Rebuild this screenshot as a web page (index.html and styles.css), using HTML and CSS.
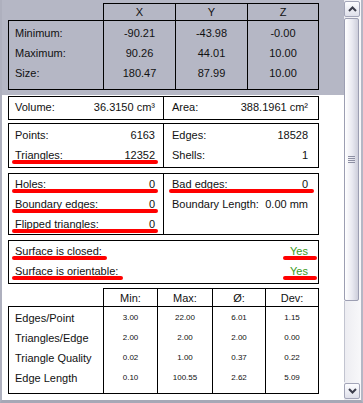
FILE: index.html
```html
<!DOCTYPE html>
<html lang="en">
<head>
    <meta charset="UTF-8">
    <title>Mesh Info</title>
    <link rel="stylesheet" href="styles.css">
</head>
<body>

<div class="window">
    <div class="pane">

        <div class="dims">
            <div class="dims-head">
                <div class="dh-blank"></div>
                <div class="dh dh-first">X</div>
                <div class="dh">Y</div>
                <div class="dh">Z</div>
            </div>
            <div class="dims-body">
                <div class="dims-row">
                    <span class="lbl">Minimum:</span><span class="num">-90.21</span><span class="num">-43.98</span><span class="num">-0.00</span>
                </div>
                <div class="dims-row">
                    <span class="lbl">Maximum:</span><span class="num">90.26</span><span class="num">44.01</span><span class="num">10.00</span>
                </div>
                <div class="dims-row">
                    <span class="lbl">Size:</span><span class="num">180.47</span><span class="num">87.99</span><span class="num">10.00</span>
                </div>
            </div>
        </div>

        <div class="sheet">
            <div class="box split vol">
                <div class="cell"><div class="row"><span>Volume:</span><span>36.3150 cm³</span></div></div>
                <div class="cell"><div class="row"><span>Area:</span><span>388.1961 cm²</span></div></div>
            </div>

            <div class="box split counts">
                <div class="cell">
                    <div class="row"><span>Points:</span><span>6163</span></div>
                    <div class="row mark"><span>Triangles:</span><span>12352</span></div>
                </div>
                <div class="cell">
                    <div class="row"><span>Edges:</span><span>18528</span></div>
                    <div class="row"><span>Shells:</span><span>1</span></div>
                </div>
            </div>

            <div class="box split defects">
                <div class="cell">
                    <div class="row mark"><span>Holes:</span><span>0</span></div>
                    <div class="row mark"><span>Boundary edges:</span><span>0</span></div>
                    <div class="row mark"><span>Flipped triangles:</span><span>0</span></div>
                </div>
                <div class="cell">
                    <div class="row mark mark-r"><span>Bad edges:</span><span>0</span></div>
                    <div class="row"><span>Boundary Length:</span><span>0.00 mm</span></div>
                </div>
            </div>

            <div class="box surface">
                <div class="row"><span class="tag">Surface is closed:</span><span class="tag yes">Yes</span></div>
                <div class="row"><span class="tag">Surface is orientable:</span><span class="tag yes">Yes</span></div>
            </div>

            <div class="stats">
                <div class="stats-head">
                    <div class="sh-blank"></div>
                    <div class="sh sh-first">Min:</div>
                    <div class="sh">Max:</div>
                    <div class="sh">Ø:</div>
                    <div class="sh">Dev:</div>
                </div>
                <div class="stats-body">
                    <div class="stats-row">
                        <span class="lbl">Edges/Point</span><span class="num">3.00</span><span class="num">22.00</span><span class="num">6.01</span><span class="num">1.15</span>
                    </div>
                    <div class="stats-row">
                        <span class="lbl">Triangles/Edge</span><span class="num">2.00</span><span class="num">2.00</span><span class="num">2.00</span><span class="num">0.00</span>
                    </div>
                    <div class="stats-row">
                        <span class="lbl">Triangle Quality</span><span class="num">0.02</span><span class="num">1.00</span><span class="num">0.37</span><span class="num">0.22</span>
                    </div>
                    <div class="stats-row">
                        <span class="lbl">Edge Length</span><span class="num">0.10</span><span class="num">100.55</span><span class="num">2.62</span><span class="num">5.09</span>
                    </div>
                </div>
            </div>
        </div>

    </div>

    <div class="scrollbar">
        <div class="sb-btn sb-up">
            <svg width="9" height="6" viewBox="0 0 9 6"><polyline points="1,5 4.5,1.5 8,5" fill="none" stroke="#3c3e4c" stroke-width="2"/></svg>
        </div>
        <div class="sb-thumb">
            <div class="grip"></div>
        </div>
        <div class="sb-track"></div>
        <div class="sb-btn sb-down">
            <svg width="9" height="6" viewBox="0 0 9 6"><polyline points="1,1 4.5,4.5 8,1" fill="none" stroke="#3c3e4c" stroke-width="2"/></svg>
        </div>
    </div>
</div>

</body>
</html>
```

FILE: styles.css
```css
html, body {
    margin: 0;
    padding: 0;
}
body {
    font: 11px "Liberation Sans", Arial, sans-serif;
    color: #111;
    background: #fff;
}

.window {
    display: flex;
    width: 363px;
    height: 403px;
    box-sizing: border-box;
    border-left: 2px solid #aeb0be;
    border-right: 2px solid #b5b7c5;
    border-bottom: 3px solid #a6a8b6;
    background: #fff;
    overflow: hidden;
}
.pane {
    width: 342px;
}

/* bounding box table */
.dims {
    background: #b5b7c5;
    padding: 3px 0 5px 6px;
}
.dims-head {
    display: grid;
    grid-template-columns: 95px 73px 72px 71px;
    height: 17px;
}
.dh {
    border-top: 1px solid #000;
    border-right: 1px solid #000;
    text-align: center;
    line-height: 16px;
}
.dh-first {
    border-left: 1px solid #000;
}
.dims-body {
    width: 311px;
    box-sizing: border-box;
    border: 1px solid #000;
}
.dims-row {
    display: grid;
    grid-template-columns: 94px 72px 72px 71px;
    line-height: 20px;
}
.dims-row .lbl {
    padding-left: 6px;
}
.dims-row .num {
    border-left: 1px solid #000;
    text-align: center;
}
.dims-row:first-child > span {
    padding-top: 2px;
}
.dims-row:last-child > span {
    padding-bottom: 6px;
}

/* white sheet */
.sheet {
    padding: 1px 0 0 6px;
}
.box {
    width: 311px;
    box-sizing: border-box;
    border: 1px solid #000;
}
.split {
    display: grid;
    grid-template-columns: 155px 154px;
}
.split > .cell:first-child {
    border-right: 1px solid #000;
    padding: 0 8px 0 6px;
}
.split > .cell:last-child {
    padding: 0 10px 0 8px;
}
.row {
    display: flex;
    justify-content: space-between;
    height: 20px;
    line-height: 20px;
    white-space: nowrap;
    position: relative;
}

.vol .cell {
    padding-bottom: 2px !important;
}
.counts {
    margin-top: 3px;
}
.counts .cell {
    padding-top: 1px !important;
    padding-bottom: 2px !important;
}
.defects {
    margin-top: 5px;
}
.surface {
    margin-top: 5px;
    padding: 0 10px 2px 6px;
}

/* red annotation strokes */
.mark::after,
.tag::after {
    content: "";
    position: absolute;
    bottom: 1px;
    height: 4px;
    border-radius: 2px;
    background: #f00;
}
.mark::after {
    left: -3px;
    right: -3px;
}
.mark-r::after {
    right: -6px;
}
.tag {
    display: inline-block;
    position: relative;
    height: 20px;
}
.tag::after {
    left: -3px;
    right: -5px;
}
.yes {
    color: #3a9a1c;
}
.yes::after {
    left: -7px;
    right: -9px;
}

/* statistics table */
.stats {
    margin-top: 4px;
}
.stats-head {
    display: grid;
    grid-template-columns: 95px 55px 55px 53px 53px;
    height: 18px;
}
.sh {
    border-top: 1px solid #000;
    border-right: 1px solid #000;
    text-align: center;
    line-height: 18px;
}
.sh-first {
    border-left: 1px solid #000;
}
.stats-body {
    width: 311px;
    box-sizing: border-box;
    border: 1px solid #000;
}
.stats-row {
    display: grid;
    grid-template-columns: 94px 54px 55px 53px 53px;
    line-height: 20px;
}
.stats-row .lbl {
    padding-left: 6px;
}
.stats-row .num {
    border-left: 1px solid #000;
    text-align: center;
    font-size: 8px;
}
.stats-row:first-child > span {
    padding-top: 1px;
}
.stats-row:last-child > span {
    padding-bottom: 5px;
}

/* scrollbar */
.scrollbar {
    width: 17px;
    display: flex;
    flex-direction: column;
    background: linear-gradient(to right, #ececf1, #f8f8fa);
}
.sb-btn {
    height: 16px;
    margin-right: 1px;
    box-sizing: border-box;
    border: 1px solid #a3a5b8;
    border-radius: 2px;
    background: linear-gradient(#fdfdff, #dfe0ea);
    display: flex;
    align-items: center;
    justify-content: center;
}
.sb-up {
    margin-top: 1px;
}
.sb-down {
    margin-top: 1px;
    margin-bottom: 1px;
}
.sb-thumb {
    height: 283px;
    margin: 1px 2px 0 0;
    box-sizing: border-box;
    border: 1px solid #9c9eb2;
    border-radius: 2px;
    background: linear-gradient(to right, #ffffff, #e9e9f1 55%, #cdcedb);
    display: flex;
    align-items: center;
    justify-content: center;
}
.grip {
    width: 7px;
    height: 7px;
    background: repeating-linear-gradient(#8d8fa3 0, #8d8fa3 1px, transparent 1px, transparent 2px);
}
.sb-track {
    flex: 1;
    border-left: 1px solid #c2c4d0;
}
```
